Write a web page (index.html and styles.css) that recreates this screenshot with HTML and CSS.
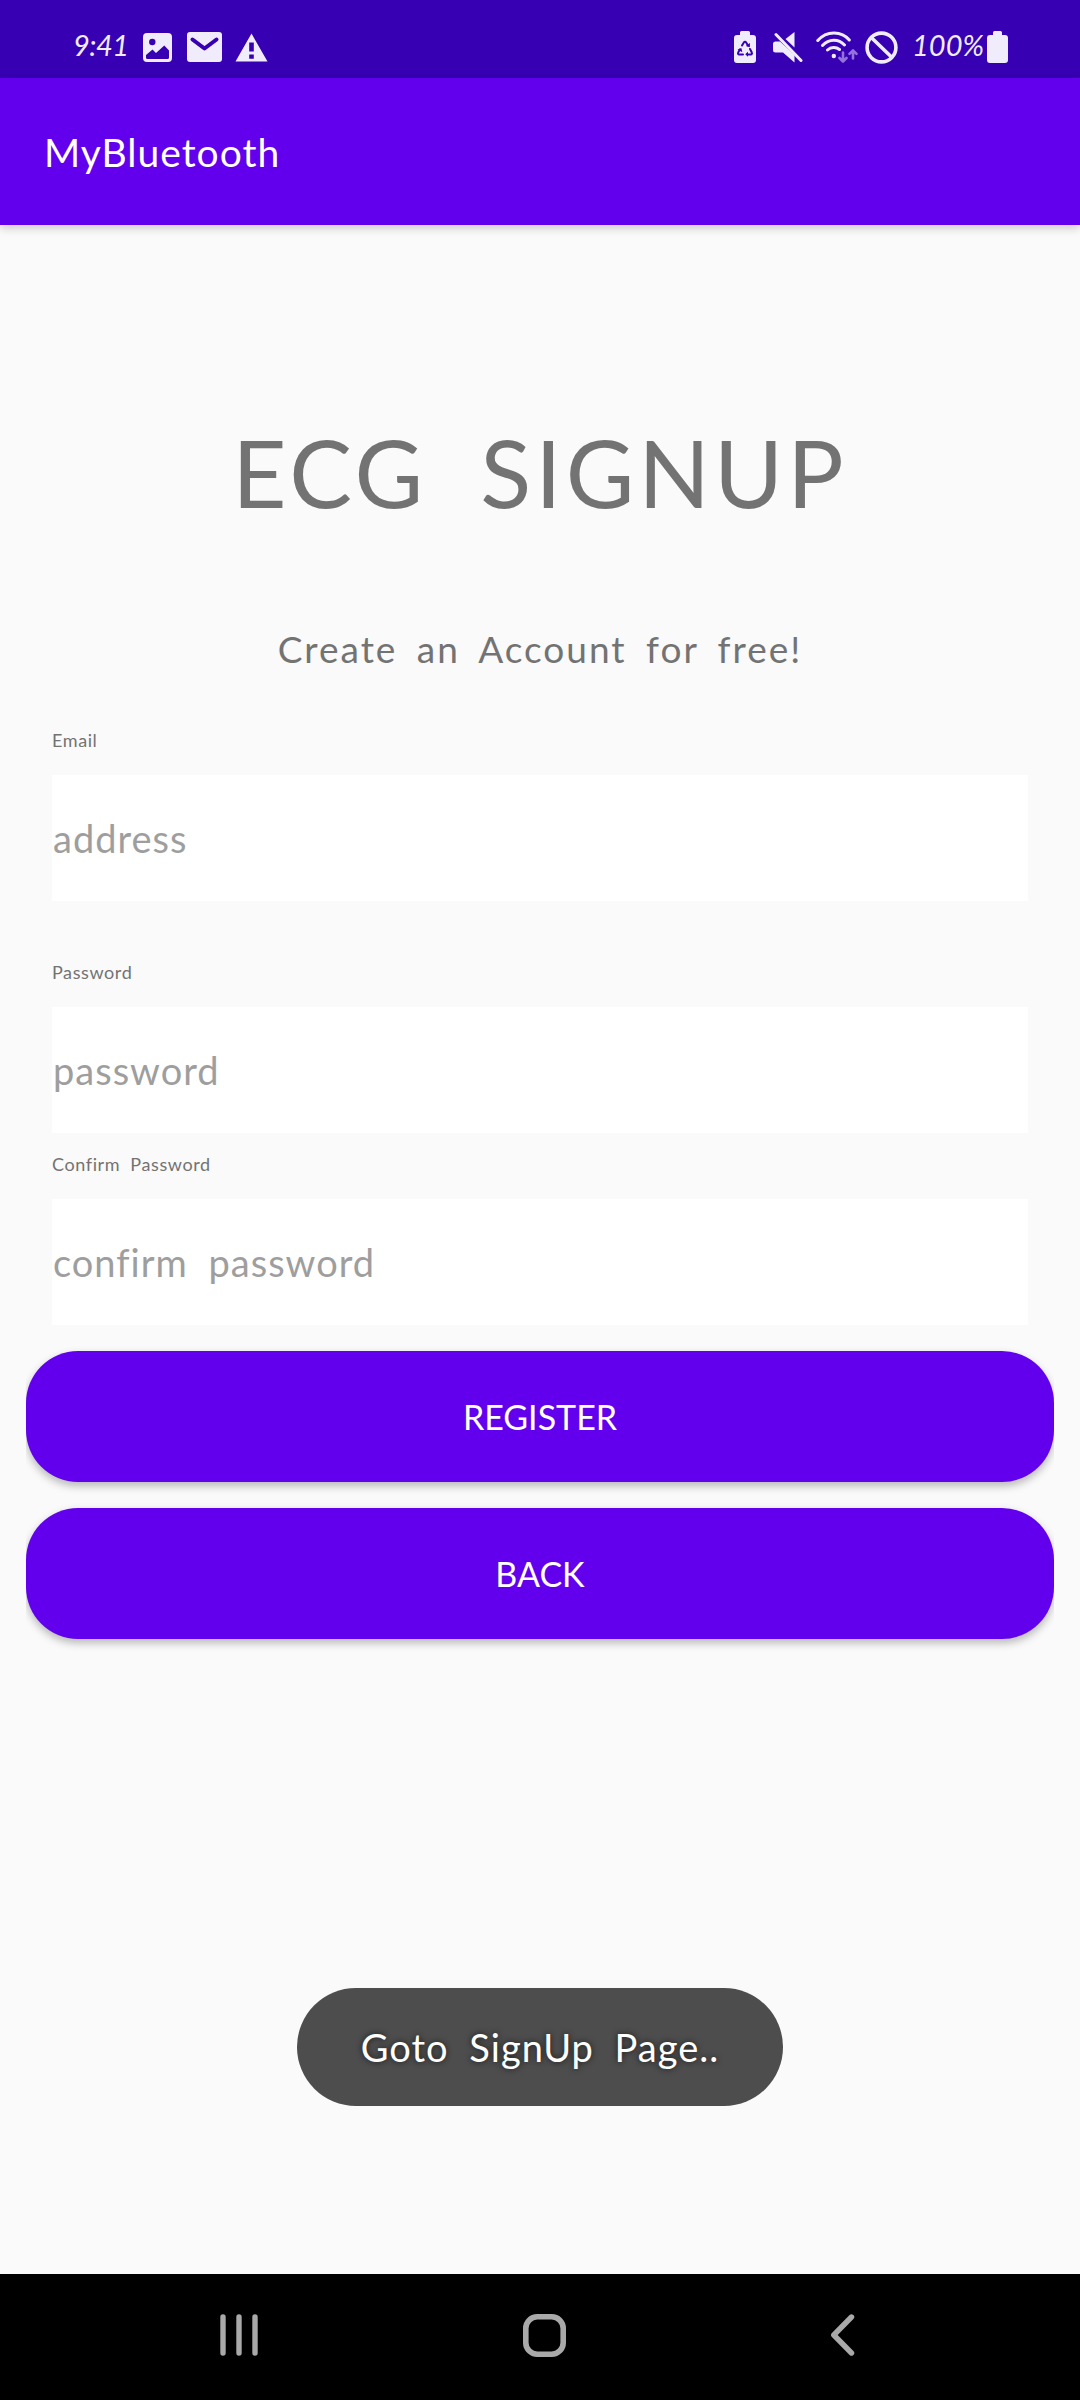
FILE: index.html
```html
<!DOCTYPE html>
<html lang="en">
<head>
<meta charset="utf-8">
<title>MyBluetooth</title>
<link rel="stylesheet" href="styles.css">
</head>
<body>
<div class="screen">
  <div class="status-bar">
    <div class="status-group">
      <span class="clock">9:41</span>
      <svg class="icon-picture" width="29" height="29" viewBox="0 0 29 29">
        <path fill-rule="evenodd" d="M4 0h21a4 4 0 0 1 4 4v21a4 4 0 0 1-4 4H4a4 4 0 0 1-4-4V4a4 4 0 0 1 4-4zM9.300 5.800a3.200 3.200 0 1 0 0 6.400a3.200 3.200 0 0 0 0-6.400zM3 22v2.500a1.500 1.500 0 0 0 1.500 1.500h20a1.500 1.500 0 0 0 1.500-1.500V17.500l-4.700-5L13 20l-3.500-3.500z"/>
      </svg>
      <svg class="icon-mail" width="35" height="30" viewBox="0 0 35 30">
        <rect width="35" height="30" rx="3"/>
        <path class="cut-line" d="M5.500 7.500L17.500 16.500L29.500 7.500" stroke-width="4"/>
      </svg>
      <svg class="icon-warning" width="33" height="29" viewBox="0 0 33 29">
        <path fill-rule="evenodd" d="M16.500 0.500L32.500 28.500H0.500zM14.200 9.500v9h4.600v-9zM14.200 21.500v4.300h4.600v-4.300z"/>
      </svg>
    </div>
    <div class="status-group">
      <svg width="22" height="32" viewBox="0 0 22 32">
        <path d="M7.500 0h7a1.500 1.500 0 0 1 1.500 1.500V4h3a3 3 0 0 1 3 3v22a3 3 0 0 1-3 3H3a3 3 0 0 1-3-3V7a3 3 0 0 1 3-3h3V1.500A1.500 1.500 0 0 1 7.500 0z"/>
        <path class="cut-line" d="M8 14.500L10 11.200a1.200 1.200 0 0 1 2 0L14 14.500M16 18l1.800 3.500a1.200 1.200 0 0 1-1 1.900H13.500M9 23.400H5.200a1.200 1.200 0 0 1-1-1.900L6 18.300" stroke-width="2"/>
        <path class="cut" d="M11.800 15l4 1.200L16 12zM14 20.800v5l-2.800-2.500zM3.500 18.500l4-1.200.8 3.900z"/>
      </svg>
      <svg class="icon-mute" width="30" height="31" viewBox="0 0 30 31">
        <path d="M21.500 0v15.500L12.500 7zM2.500 9.500H7L21.500 23v7.500L10 20.500H2.500A2.500 2.500 0 0 1 0 18v-6a2.500 2.500 0 0 1 2.500-2.500z"/>
        <path class="line" d="M3 2.500L28 28.500" stroke-width="3"/>
      </svg>
      <svg class="icon-wifi" width="42" height="32" viewBox="0 0 42 32">
        <path class="line" d="M1.800 9.500C10.500-.5 25.500-.5 33.300 9M6.500 14.500C13 7.500 22.500 7.500 28.500 14M11.500 19C15 15.800 20 15.800 23.500 18.500" stroke-width="3"/>
        <circle cx="17.800" cy="25" r="2.200"/>
        <path class="line faint" d="M27 21.500v8.500M23.500 27l3.500 3.500 3.500-3.500M37 27.500V20M33.500 22.800L37 19.300l3.500 3.500" stroke-width="2.600"/>
      </svg>
      <svg class="icon-block" width="33" height="33" viewBox="0 0 33 33">
        <circle class="line" cx="16.500" cy="16.500" r="14.400" stroke-width="3.600"/>
        <path class="line" d="M6.800 7L26.500 26" stroke-width="3.600"/>
      </svg>
      <span class="battery-level">100%</span>
      <svg class="icon-battery" width="21" height="32" viewBox="0 0 21 32">
        <path d="M7.500 0h6A1.500 1.500 0 0 1 15 1.500V4h3a3 3 0 0 1 3 3v22a3 3 0 0 1-3 3H3a3 3 0 0 1-3-3V7a3 3 0 0 1 3-3h3V1.500A1.500 1.500 0 0 1 7.500 0z"/>
      </svg>
    </div>
  </div>

  <header class="app-bar"><span class="app-title">MyBluetooth</span></header>

  <main class="content">
    <h1 class="heading">ECG SIGNUP</h1>
    <p class="subtitle">Create an Account for free!</p>
    <form class="form">
      <div class="field">
        <label class="label label-email">Email</label>
        <div class="input"><span class="hint-address">address</span></div>
      </div>
      <div class="field field-password">
        <label class="label">Password</label>
        <div class="input"><span class="hint-password">password</span></div>
      </div>
      <div class="field field-confirm">
        <label class="label label-confirm">Confirm Password</label>
        <div class="input"><span class="hint-confirm">confirm password</span></div>
      </div>
    </form>
    <div class="actions">
      <button class="button" type="button"><span class="register">REGISTER</span></button>
      <button class="button" type="button"><span class="back">BACK</span></button>
    </div>
  </main>

  <div class="toast"><span class="toast-text">Goto SignUp Page..</span></div>

  <nav class="nav-bar">
    <svg width="38" height="42" viewBox="0 0 38 42">
      <path class="nav-line" d="M3 3v36M19 3v36M35 3v36" stroke-width="5.400"/>
    </svg>
    <svg width="43" height="43" viewBox="0 0 43 43">
      <rect class="nav-line" x="2.800" y="2.800" width="37.400" height="37.400" rx="11.500" stroke-width="5.600"/>
    </svg>
    <svg width="25" height="42" viewBox="0 0 25 42">
      <path class="nav-line" d="M21.500 3L3.800 21L21.500 39" stroke-width="5.400"/>
    </svg>
  </nav>
</div>
</body>
</html>
```
FILE: styles.css
```css
* { box-sizing: border-box; }

body {
  margin: 0;
  background: #fafafa;
  font-family: Lato, "Open Sans", sans-serif;
}

.screen {
  position: relative;
  display: flex;
  flex-direction: column;
  width: 1080px;
  height: 2400px;
  overflow: hidden;
}

svg { display: block; flex: none; }

/* Status bar */
.status-bar {
  display: flex;
  justify-content: space-between;
  height: 78px;
  padding: 16px 72px 0 73px;
  background: #3700b3;
  color: #f1ecfb;
}

.status-group { display: flex; align-items: center; }
.status-group svg { fill: #f1ecfb; }
.status-group .cut { fill: #3700b3; }
.status-group .line { fill: none; stroke: #f1ecfb; stroke-linecap: round; stroke-linejoin: round; }
.status-group .cut-line { fill: none; stroke: #3700b3; stroke-linecap: round; stroke-linejoin: round; }
.status-group .faint { stroke: #9473dc; }

.clock, .battery-level {
  font-size: 29px;
  font-style: italic;
  line-height: 40px;
  white-space: nowrap;
  transform: translateY(-2px);
}
.clock { width: 70px; letter-spacing: -0.5px; }
.battery-level { width: 75px; margin-left: 14px; letter-spacing: 0; }

.icon-mail { margin-left: 15px; }
.icon-warning { margin-left: 13px; }
.icon-mute { margin-left: 17px; }
.icon-wifi { margin-left: 13px; }
.icon-block { margin-left: 7px; }

/* App bar */
.app-bar {
  display: flex;
  align-items: center;
  height: 147px;
  padding-left: 44px;
  background: #6200ee;
  color: #fff;
  box-shadow: 0 3px 9px rgba(0, 0, 0, .2);
}
.app-title { font-size: 39px; letter-spacing: 1px; }

/* Sign-up form */
.content { flex: 1; color: #737373; }

.heading {
  margin: 192px 0 0;
  font-size: 94px;
  font-weight: 400;
  line-height: 110px;
  letter-spacing: 4px;
  word-spacing: 25px;
  text-align: center;
}

.subtitle {
  margin: 100px 0 0;
  font-size: 37px;
  line-height: 44px;
  letter-spacing: 2px;
  word-spacing: 8px;
  text-align: center;
}

.form { padding: 57px 52px 0; }
.field { display: flex; flex-direction: column; gap: 23px; }
.field-password { margin-top: 59px; }
.field-confirm { margin-top: 19px; }

.label { font-size: 18px; line-height: 24px; letter-spacing: .6px; }
.label-confirm { word-spacing: 5px; }

.input {
  display: flex;
  align-items: center;
  height: 126px;
  padding-left: 1px;
  background: #fff;
  color: #9e9e9e;
  font-size: 38px;
  letter-spacing: 1px;
}
.hint-confirm { word-spacing: 10px; }

.actions { display: grid; gap: 0; padding: 26px 26px 0; }

.button {
  height: 131px;
  margin: 0 0 26px;
  padding: 0;
  border: 0;
  border-radius: 52px;
  background: #6200ee;
  box-shadow: 0 4px 8px rgba(0, 0, 0, .27);
  clip-path: inset(-10px 0 -20px);
  color: #fff;
  font-family: inherit;
  font-size: 34px;
}

/* Toast message */
.toast {
  position: absolute;
  top: 1988px;
  left: 297px;
  display: flex;
  align-items: center;
  justify-content: center;
  width: 486px;
  height: 118px;
  border-radius: 59px;
  background: #4d4d4d;
  color: #fff;
  font-size: 38px;
}
.toast-text {
  letter-spacing: 1px;
  word-spacing: 10px;
  white-space: nowrap;
  text-shadow: 0 0 6px rgba(0, 0, 0, .7);
}

/* System navigation */
.nav-bar {
  display: flex;
  align-items: center;
  justify-content: space-between;
  height: 126px;
  padding: 0 225px 4px 220px;
  background: #000;
}
.nav-line { fill: none; stroke: #a9a9a9; stroke-linecap: round; stroke-linejoin: round; }
```
